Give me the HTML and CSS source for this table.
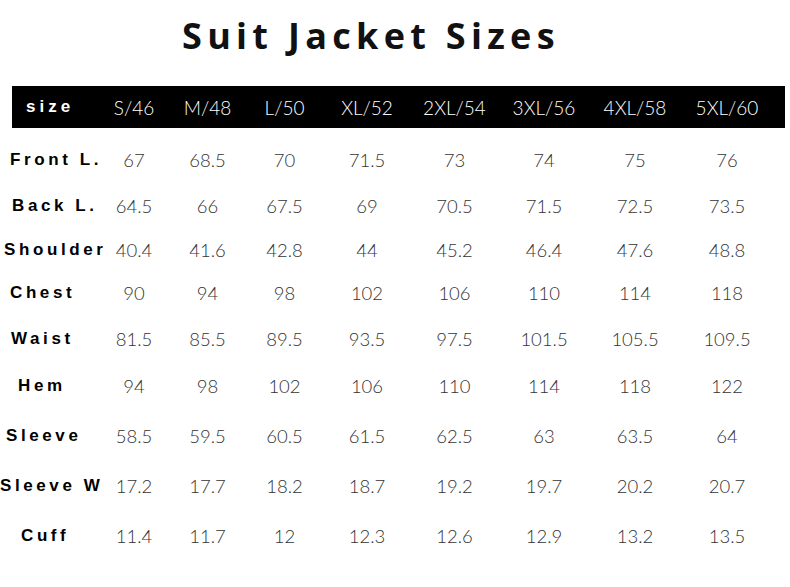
FILE: index.html
```html
<!DOCTYPE html>
<html>
<head>
<meta charset="utf-8">
<link rel="stylesheet" href="styles.css">
</head>
<body>
<div class="page">
  <h1 class="title">Suit Jacket Sizes</h1>
  <div class="head">
    <div class="hlabel">size</div>
    <div>S/46</div><div>M/48</div><div>L/50</div><div>XL/52</div>
    <div>2XL/54</div><div>3XL/56</div><div>4XL/58</div><div>5XL/60</div>
  </div>
  <div class="body">
    <div class="lab l-front">Front L.</div>
    <div>67</div><div>68.5</div><div>70</div><div>71.5</div><div>73</div><div>74</div><div>75</div><div>76</div>
    <div class="lab l-back">Back L.</div>
    <div>64.5</div><div>66</div><div>67.5</div><div>69</div><div>70.5</div><div>71.5</div><div>72.5</div><div>73.5</div>
    <div class="lab l-shoulder">Shoulder</div>
    <div>40.4</div><div>41.6</div><div>42.8</div><div>44</div><div>45.2</div><div>46.4</div><div>47.6</div><div>48.8</div>
    <div class="lab l-chest">Chest</div>
    <div>90</div><div>94</div><div>98</div><div>102</div><div>106</div><div>110</div><div>114</div><div>118</div>
    <div class="lab l-waist">Waist</div>
    <div>81.5</div><div>85.5</div><div>89.5</div><div>93.5</div><div>97.5</div><div>101.5</div><div>105.5</div><div>109.5</div>
    <div class="lab l-hem">Hem</div>
    <div>94</div><div>98</div><div>102</div><div>106</div><div>110</div><div>114</div><div>118</div><div>122</div>
    <div class="lab l-sleeve">Sleeve</div>
    <div>58.5</div><div>59.5</div><div>60.5</div><div>61.5</div><div>62.5</div><div>63</div><div>63.5</div><div>64</div>
    <div class="lab l-sleevew">Sleeve W</div>
    <div>17.2</div><div>17.7</div><div>18.2</div><div>18.7</div><div>19.2</div><div>19.7</div><div>20.2</div><div>20.7</div>
    <div class="lab l-cuff">Cuff</div>
    <div>11.4</div><div>11.7</div><div>12</div><div>12.3</div><div>12.6</div><div>12.9</div><div>13.2</div><div>13.5</div>
  </div>
</div>
</body>
</html>
```

FILE: styles.css
```css
html, body {
  margin: 0;
  padding: 0;
  background: #fff;
}
.page {
  width: 790px;
  height: 587px;
  overflow: hidden;
}
.title {
  margin: 0;
  height: 86px;
  box-sizing: border-box;
  padding: 13px 0 0 182px;
  font-family: "Open Sans", sans-serif;
  font-weight: 700;
  font-size: 36px;
  line-height: 46px;
  letter-spacing: 5.3px;
  color: #111;
  white-space: nowrap;
}
.head {
  margin-left: 12px;
  width: 773px;
  height: 42px;
  background: #000;
  display: grid;
  grid-template-columns: 86px 72px 75px 79px 86px 89px 90px 92px 92px 12px;
  align-items: center;
  color: #fff;
  font-family: "Lato", sans-serif;
  font-weight: 300;
  font-size: 19px;
  text-align: center;
}
.head .hlabel {
  text-align: left;
  padding-left: 14px;
  font-family: "Liberation Sans", Arial, sans-serif;
  font-weight: 700;
  font-size: 17px;
  letter-spacing: 4px;
}
.body {
  display: grid;
  grid-template-columns: 98px 72px 75px 79px 86px 89px 90px 92px 92px;
  grid-template-rows: 48px 44px 43px 44px 47px 48px 51px 50px 50px;
  padding-top: 8px;
  align-items: center;
  font-family: "Lato", sans-serif;
  font-weight: 300;
  font-size: 18.5px;
  color: #333;
  text-align: center;
}
.body .lab {
  text-align: left;
  font-family: "Liberation Sans", Arial, sans-serif;
  font-weight: 700;
  font-size: 17px;
  letter-spacing: 3.6px;
  color: #000;
  white-space: nowrap;
}
.l-front { padding-left: 10px; }
.l-back { padding-left: 12px; }
.l-shoulder { padding-left: 4px; }
.l-chest { padding-left: 10px; }
.l-waist { padding-left: 11px; }
.l-hem { padding-left: 18px; }
.l-sleeve { padding-left: 6px; }
.l-sleevew { padding-left: 0; }
.l-cuff { padding-left: 21px; }
```
